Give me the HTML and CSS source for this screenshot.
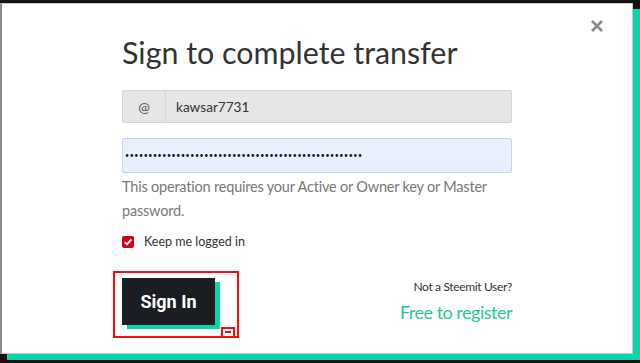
FILE: index.html
```html
<!DOCTYPE html>
<html>
<head>
<meta charset="utf-8">
<link rel="stylesheet" href="styles.css">
</head>
<body>
<div class="modal">
  <button class="close" aria-label="Close">
    <svg width="14" height="14" viewBox="0 0 14 14"><path d="M2 2 L12 12 M12 2 L2 12" stroke="#8a8a8a" stroke-width="2.6" stroke-linecap="butt"/></svg>
  </button>
  <div class="content">
    <h1 class="title">Sign to complete transfer</h1>
    <div class="input-group">
      <span class="addon">@</span>
      <span class="field user">kawsar7731</span>
    </div>
    <div class="password">&bull;&bull;&bull;&bull;&bull;&bull;&bull;&bull;&bull;&bull;&bull;&bull;&bull;&bull;&bull;&bull;&bull;&bull;&bull;&bull;&bull;&bull;&bull;&bull;&bull;&bull;&bull;&bull;&bull;&bull;&bull;&bull;&bull;&bull;&bull;&bull;&bull;&bull;&bull;&bull;&bull;&bull;&bull;&bull;&bull;&bull;&bull;&bull;&bull;&bull;&bull;</div>
    <p class="help">This operation requires your Active or Owner key or Master password.</p>
    <label class="keep">
      <span class="check"><svg width="10" height="10" viewBox="0 0 10 10"><path d="M1.8 5.2 L4 7.4 L8.4 2.4" fill="none" stroke="#fff" stroke-width="1.8"/></svg></span>
      <span>Keep me logged in</span>
    </label>
    <div class="actions">
      <div class="btn-wrap">
        <button class="signin">Sign In</button>
        <span class="mark"><span class="mark-inner"></span></span>
      </div>
      <div class="register">
        <div class="not-user">Not a Steemit User?</div>
        <div class="free">Free to register</div>
      </div>
    </div>
  </div>
</div>
</body>
</html>
```
FILE: styles.css
```css
html, body {
  margin: 0;
  padding: 0;
  background: #111;
  width: 640px;
  height: 363px;
  overflow: hidden;
}
body {
  padding-top: 3px;
  box-sizing: border-box;
  font-family: "Lato", "Noto Sans", sans-serif;
}
.modal {
  position: relative;
  width: 633px;
  height: 351px;
  box-sizing: border-box;
  background: #fff;
  border: 1px solid #c8c8c8;
  border-left: 2px solid #8a8a8a;
  box-shadow: 7px 6px 0 #06d6a9;
}
.close {
  position: absolute;
  right: 28px;
  top: 15px;
  background: none;
  border: 0;
  padding: 0;
  width: 14px;
  height: 14px;
}
.close svg { display: block; }
.content {
  padding: 28px 0 0 120px;
  width: 390px;
}
.title {
  margin: 0;
  font-weight: 400;
  font-size: 30.4px;
  line-height: 40px;
  color: #333;
}
.input-group {
  margin-top: 18px;
  display: flex;
  height: 33px;
  border: 1px solid #d4d4d4;
  border-radius: 2px;
  background: #e6e6e6;
  box-sizing: border-box;
}
.addon {
  width: 42px;
  border-right: 1px solid #d4d4d4;
  display: flex;
  align-items: center;
  justify-content: center;
  font-size: 14px;
  color: #555;
}
.field {
  display: flex;
  align-items: center;
  padding-left: 10px;
  font-size: 13.6px;
  color: #333;
}
.password {
  margin-top: 15px;
  height: 35px;
  box-sizing: border-box;
  border: 1px solid #c9d3e4;
  border-radius: 2px;
  background: #e8f0fe;
  font-size: 7px;
  line-height: 33px;
  padding-left: 2px;
  letter-spacing: 0.6px;
  color: #111;
  white-space: nowrap;
  overflow: hidden;
}
.help {
  margin: 2px 0 0;
  font-size: 14.5px;
  letter-spacing: -0.2px;
  line-height: 24px;
  color: #777;
}
.keep {
  margin-top: 11px;
  display: flex;
  align-items: center;
  gap: 10px;
  font-size: 12.5px;
  color: #333;
}
.check {
  width: 12px;
  height: 12px;
  border-radius: 2px;
  background: #d0021b;
  display: flex;
  align-items: center;
  justify-content: center;
}
.check svg { display: block; }
.actions {
  margin-top: 29px;
  display: flex;
  justify-content: space-between;
  align-items: flex-start;
}
.btn-wrap {
  position: relative;
}
.signin {
  display: block;
  width: 93px;
  height: 47px;
  border: 0;
  background: #1a1e23;
  color: #fff;
  font-family: "Roboto", "Liberation Sans", sans-serif;
  font-weight: 700;
  font-size: 18px;
  box-shadow: 5px 4px 0 #06d6a9;
  padding: 0;
}
.mark {
  position: absolute;
  left: -9px;
  top: -7px;
  width: 126px;
  height: 67px;
  box-sizing: border-box;
  border: 2px solid #ff0a0a;
}
.mark-inner {
  position: absolute;
  right: 2px;
  bottom: 0;
  width: 14px;
  height: 9px;
  box-sizing: border-box;
  border: 2px solid #ff0a0a;
  border-bottom: 0;
  background: #fff;
}
.mark-inner::after {
  content: "";
  position: absolute;
  left: 2px;
  right: 2px;
  top: 2px;
  height: 2px;
  background: #ff0a0a;
}
.register {
  text-align: right;
  padding-top: 1px;
}
.not-user {
  font-size: 12px;
  letter-spacing: -0.35px;
  color: #333;
  line-height: 16px;
}
.free {
  margin-top: 5px;
  font-size: 18px;
  letter-spacing: -0.5px;
  line-height: 24px;
  color: #1fc99a;
}
```
